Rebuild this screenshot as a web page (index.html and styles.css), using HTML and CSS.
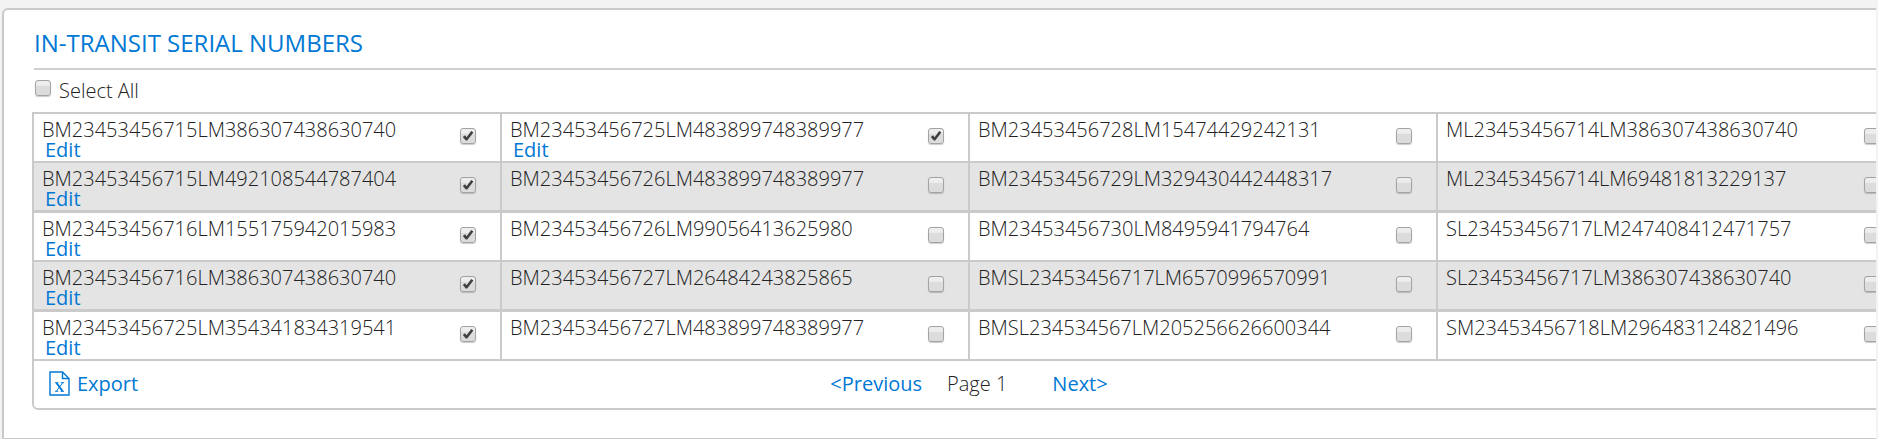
FILE: index.html
```
<!DOCTYPE html>
<html lang="en">
<head>
	<meta charset="UTF-8">
	<meta name="viewport" content="width=device-width, initial-scale=1.0">
	<title>In-Transit Serial Numbers</title>
	<link rel="stylesheet" href="styles.css">
</head>
<body>
<div class="viewport">
	<section class="panel">
		<h1 class="panel-title">In-Transit Serial Numbers</h1>

		<div class="select-all">
			<input type="checkbox" id="select-all">
			<label for="select-all">Select All</label>
		</div>

		<div class="grid-box">
			<table class="serials">
				<tbody>
				<tr>
					<td><div class="cell"><div><label for="s1">BM23453456715LM386307438630740</label><a href="#">Edit</a></div><input type="checkbox" id="s1" checked></div></td>
					<td><div class="cell"><div><label for="s2">BM23453456725LM483899748389977</label><a href="#">Edit</a></div><input type="checkbox" id="s2" checked></div></td>
					<td><div class="cell"><div><label for="s3">BM23453456728LM15474429242131</label></div><input type="checkbox" id="s3"></div></td>
					<td><div class="cell"><div><label for="s4">ML23453456714LM386307438630740</label></div><input type="checkbox" id="s4"></div></td>
				</tr>
				<tr>
					<td><div class="cell"><div><label for="s5">BM23453456715LM492108544787404</label><a href="#">Edit</a></div><input type="checkbox" id="s5" checked></div></td>
					<td><div class="cell"><div><label for="s6">BM23453456726LM483899748389977</label></div><input type="checkbox" id="s6"></div></td>
					<td><div class="cell"><div><label for="s7">BM23453456729LM329430442448317</label></div><input type="checkbox" id="s7"></div></td>
					<td><div class="cell"><div><label for="s8">ML23453456714LM69481813229137</label></div><input type="checkbox" id="s8"></div></td>
				</tr>
				<tr>
					<td><div class="cell"><div><label for="s9">BM23453456716LM155175942015983</label><a href="#">Edit</a></div><input type="checkbox" id="s9" checked></div></td>
					<td><div class="cell"><div><label for="s10">BM23453456726LM99056413625980</label></div><input type="checkbox" id="s10"></div></td>
					<td><div class="cell"><div><label for="s11">BM23453456730LM8495941794764</label></div><input type="checkbox" id="s11"></div></td>
					<td><div class="cell"><div><label for="s12">SL23453456717LM247408412471757</label></div><input type="checkbox" id="s12"></div></td>
				</tr>
				<tr>
					<td><div class="cell"><div><label for="s13">BM23453456716LM386307438630740</label><a href="#">Edit</a></div><input type="checkbox" id="s13" checked></div></td>
					<td><div class="cell"><div><label for="s14">BM23453456727LM26484243825865</label></div><input type="checkbox" id="s14"></div></td>
					<td><div class="cell"><div><label for="s15">BMSL23453456717LM6570996570991</label></div><input type="checkbox" id="s15"></div></td>
					<td><div class="cell"><div><label for="s16">SL23453456717LM386307438630740</label></div><input type="checkbox" id="s16"></div></td>
				</tr>
				<tr>
					<td><div class="cell"><div><label for="s17">BM23453456725LM354341834319541</label><a href="#">Edit</a></div><input type="checkbox" id="s17" checked></div></td>
					<td><div class="cell"><div><label for="s18">BM23453456727LM483899748389977</label></div><input type="checkbox" id="s18"></div></td>
					<td><div class="cell"><div><label for="s19">BMSL234534567LM205256626600344</label></div><input type="checkbox" id="s19"></div></td>
					<td><div class="cell"><div><label for="s20">SM23453456718LM296483124821496</label></div><input type="checkbox" id="s20"></div></td>
				</tr>
				</tbody>
			</table>

			<div class="grid-footer">
				<a class="export" href="#">
					<svg width="21" height="25" viewBox="0 0 21 25" fill="none" stroke="currentColor" stroke-width="1.4" aria-hidden="true">
						<path d="M1 1H13.5L20 7.5V24H1Z"/>
						<path d="M13.5 1V7.5H20"/>
						<path d="M7.5 12L13.5 20" stroke-width="2"/>
						<path d="M13.5 12L7.5 20" stroke-width="1"/>
						<path d="M6 11.7H9.4M11.8 11.7H15M6 20.3H9.2M11.6 20.3H15" stroke-width="1"/>
					</svg>
					<span>Export</span>
				</a>
				<nav class="pager">
					<a href="#">&lt;Previous</a>
					<span class="page">Page 1</span>
					<a href="#">Next&gt;</a>
				</nav>
			</div>
		</div>
	</section>
</div>
</body>
</html>
```
FILE: styles.css
```
* {
	box-sizing: border-box;
}

body {
	margin: 0;
	background: #f3f3f3;
	color: #222;
	font-family: "Open Sans", sans-serif;
	font-size: 20px;
	font-weight: 300;
	line-height: 20px;
}

a {
	color: #0078d4;
	font-weight: 400;
	text-decoration: none;
}

/* the panel is wider than the window, cut it at the right edge */
.viewport {
	overflow: hidden;
	margin-right: 2px;
	padding: 8px 0 0 2px;
}

.panel {
	width: calc(100% + 62px);
	padding: 17px 30px 28px;
	background: #fff;
	border: 2px solid #cacaca;
	border-bottom-width: 1px;
	border-radius: 6px 6px 0 0;
}

.panel-title {
	margin: 0;
	padding-bottom: 9px;
	border-bottom: 2px solid #d0d0d0;
	color: #0078d4;
	font-size: 24px;
	font-weight: 400;
	line-height: 32px;
	text-transform: uppercase;
}

/* CHECKBOXES */
input[type="checkbox"] {
	appearance: none;
	flex: none;
	width: 16px;
	height: 16px;
	margin: 0;
	background: linear-gradient(#ededed 30%, #dcdcdc 40%);
	border: 1px solid #a3a3a3;
	border-radius: 3px;
	box-shadow: 0 1px 1px rgba(0, 0, 0, 0.2);
}

input[type="checkbox"]:checked {
	background:
			url("data:image/svg+xml,%3Csvg xmlns='http://www.w3.org/2000/svg' viewBox='0 0 14 14'%3E%3Cpath d='M1.8 8L4 6.2L5.6 8.2L10.2 2L12.4 3.4L6.2 11.6H4.8Z' fill='%23404040'/%3E%3C/svg%3E") center / 14px 14px no-repeat,
			linear-gradient(#ededed 30%, #dcdcdc 40%);
}

.select-all {
	display: flex;
	gap: 8px;
	padding: 10px 1px 11px;
}

.select-all label {
	padding-top: 1px;
}

/* SERIAL NUMBER GRID */
.grid-box {
	margin-left: -2px;
	border: 2px solid #cacaca;
	border-radius: 0 0 6px 6px;
}

/* first column border sits on top of the box border */
.serials {
	width: calc(100% + 2px);
	margin-left: -2px;
	border-collapse: separate;
	border-spacing: 0;
	table-layout: fixed;
}

.serials td {
	padding: 0;
	border-left: 2px solid #cacaca;
	border-bottom: 2px solid #cacaca;
	vertical-align: top;
}

.serials tr:nth-child(even) td {
	background: #e4e4e4;
	border-bottom-width: 3px;
}

.cell {
	display: flex;
	justify-content: space-between;
	min-height: 47px;
	padding: 6px 24px 1px 8px;
}

.cell label,
.cell a {
	display: block;
}

.cell a {
	margin-left: 3px;
}

.cell input {
	margin-top: 8px;
}

/* FOOTER */
.grid-footer {
	display: grid;
	grid-template-columns: 1fr auto 1fr;
	align-items: center;
	min-height: 47px;
	padding: 0 15px 2px;
}

.export {
	display: flex;
	align-items: center;
	gap: 7px;
}

.pager {
	display: flex;
	gap: 25px;
}

.page {
	padding-right: 20px;
}
```
